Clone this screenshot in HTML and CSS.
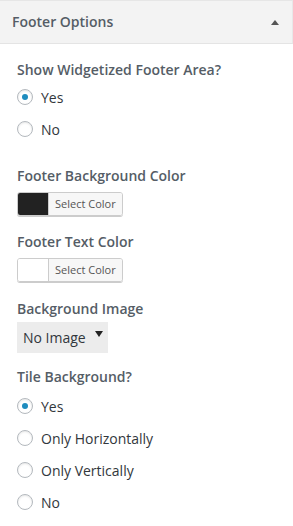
FILE: index.html
```html
<!DOCTYPE html>
<html>
<head>
<meta charset="utf-8">
<link rel="stylesheet" href="styles.css">
</head>
<body>
<div class="panel">
  <div class="panel-head">
    <span class="panel-title">Footer Options</span>
    <span class="caret-up"></span>
  </div>
  <div class="panel-body">
    <div class="control">
      <div class="label">Show Widgetized Footer Area?</div>
      <div class="radios">
        <label class="radio"><span class="dot checked"></span>Yes</label>
        <label class="radio"><span class="dot"></span>No</label>
      </div>
    </div>
    <div class="control gap-lg">
      <div class="label">Footer Background Color</div>
      <div class="color-btn"><span class="swatch dark"></span><span class="color-text">Select Color</span></div>
    </div>
    <div class="control loose">
      <div class="label">Footer Text Color</div>
      <div class="color-btn"><span class="swatch light"></span><span class="color-text">Select Color</span></div>
    </div>
    <div class="control tight">
      <div class="label">Background Image</div>
      <div class="select"><span>No Image</span><span class="caret-down"></span></div>
    </div>
    <div class="control">
      <div class="label">Tile Background?</div>
      <div class="radios spaced">
        <label class="radio"><span class="dot checked"></span>Yes</label>
        <label class="radio"><span class="dot"></span>Only Horizontally</label>
        <label class="radio"><span class="dot"></span>Only Vertically</label>
        <label class="radio"><span class="dot"></span>No</label>
      </div>
    </div>
  </div>
</div>
</body>
</html>
```
FILE: styles.css
```css
html, body {
  margin: 0;
  padding: 0;
  background: #fff;
}
body {
  font-family: "Open Sans", "Liberation Sans", sans-serif;
  width: 293px;
  height: 526px;
  overflow: hidden;
}
.panel {
  display: flex;
  flex-direction: column;
}
.panel-head {
  box-sizing: border-box;
  height: 44px;
  border-top: 1px solid #e6e6e6;
  border-bottom: 1px solid #e4e4e4;
  border-right: 1px solid #e8e8e8;
  background: #f3f3f3;
  display: flex;
  align-items: center;
  justify-content: space-between;
  padding: 0 13px 0 12px;
}
.panel-title {
  font-size: 14px;
  font-weight: 600;
  color: #555d66;
  line-height: 20px;
}
.caret-up {
  width: 0;
  height: 0;
  border-left: 4px solid transparent;
  border-right: 4px solid transparent;
  border-bottom: 5px solid #555;
}
.panel-body {
  padding: 16px 17px 0 17px;
  display: flex;
  flex-direction: column;
}
.control {
  display: flex;
  flex-direction: column;
  margin-bottom: 16px;
}
.control.loose {
  margin-bottom: 17px;
}
.control.tight {
  margin-bottom: 14px;
}
.label {
  font-size: 14px;
  font-weight: 600;
  color: #555d66;
  line-height: 20px;
  margin-bottom: 6px;
}
.radios {
  display: flex;
  flex-direction: column;
  margin-top: -5px;
}
.radios.spaced {
  margin-top: -3px;
}
.radio {
  display: flex;
  align-items: center;
  height: 32px;
  font-size: 14px;
  color: #32373c;
}
.dot {
  width: 16px;
  height: 16px;
  box-sizing: border-box;
  border: 1px solid #b4b9be;
  border-radius: 50%;
  margin-right: 8px;
  box-shadow: inset 0 1px 2px rgba(0,0,0,0.1);
  display: flex;
  align-items: center;
  justify-content: center;
  background: #fff;
}
.dot.checked::after {
  content: "";
  width: 6px;
  height: 6px;
  border-radius: 50%;
  background: #1e8cbe;
}
.gap-lg {
  margin-top: 5px;
}
.color-btn {
  display: flex;
  align-self: flex-start;
  height: 24px;
  box-sizing: border-box;
  border: 1px solid #ccc;
  border-radius: 3px;
  overflow: hidden;
  box-shadow: 0 1px 0 #ccc;
}
.swatch {
  width: 30px;
  border-right: 1px solid #ccc;
}
.swatch.dark { background: #222; }
.swatch.light { background: #fff; }
.color-text {
  background: #f7f7f7;
  font-size: 11px;
  color: #555;
  padding: 0 6px;
  line-height: 22px;
}
.select {
  display: flex;
  align-self: flex-start;
  align-items: center;
  height: 31px;
  margin-top: -3px;
  background: #ececec;
  padding: 0 5px 0 6px;
  font-size: 14px;
  color: #32373c;
  gap: 9px;
}
.caret-down {
  width: 0;
  height: 0;
  border-left: 4px solid transparent;
  border-right: 4px solid transparent;
  border-top: 6px solid #222;
  margin-top: -8px;
}
```
